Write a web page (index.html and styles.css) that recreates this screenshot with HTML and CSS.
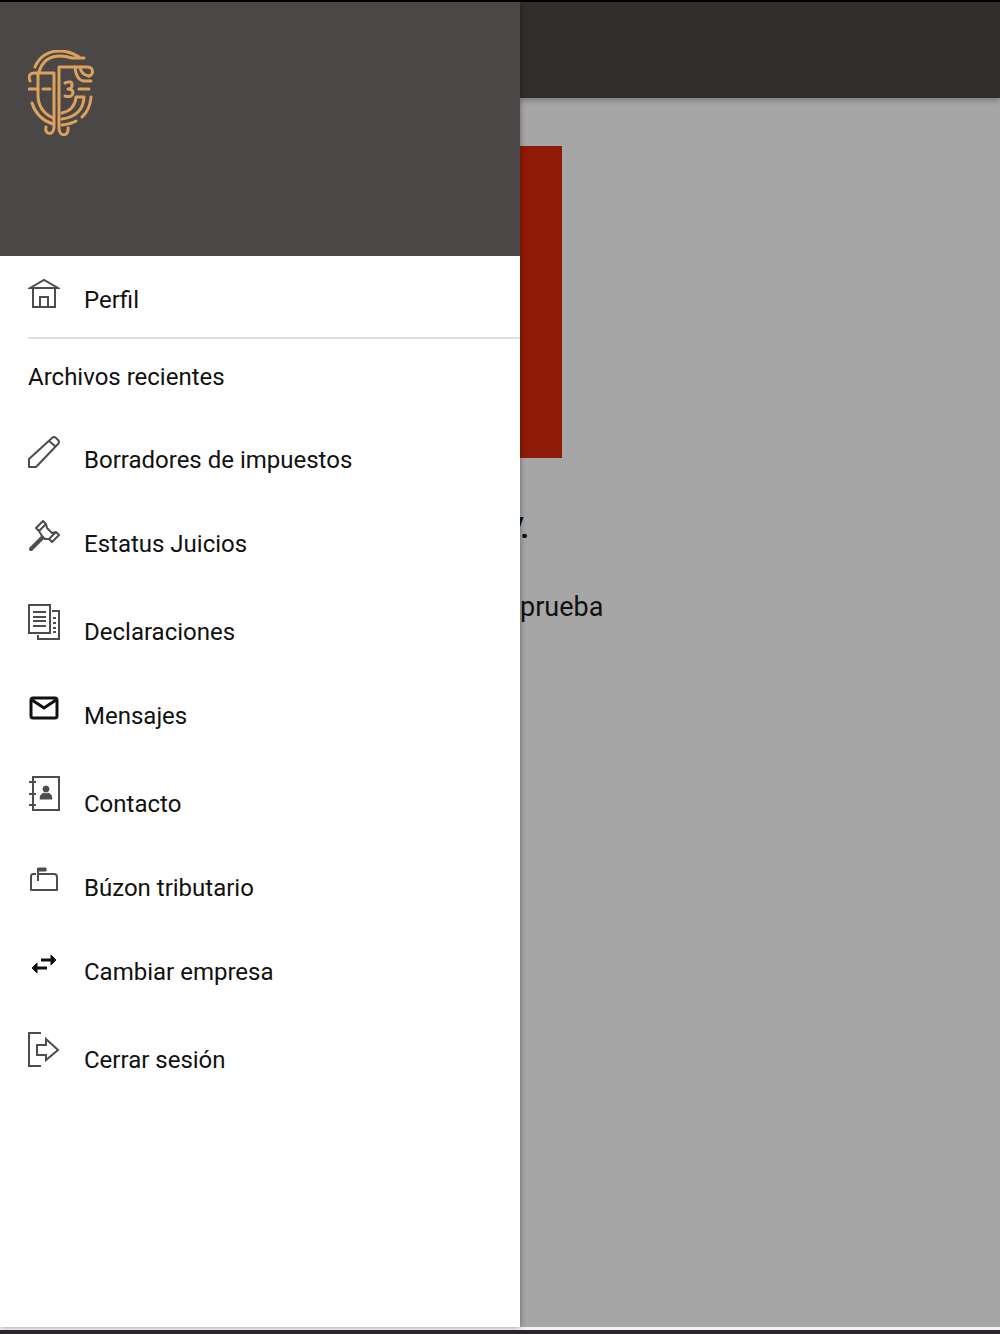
FILE: index.html
```html
<!DOCTYPE html>
<html lang="es">
<head>
    <meta charset="UTF-8">
    <meta name="viewport" content="width=device-width, initial-scale=1.0">
    <title>Perfil</title>
    <link rel="stylesheet" href="styles.css">
</head>
<body>
    <div class="app">
        <aside class="drawer">
            <div class="drawer-header">
                <svg class="logo" viewBox="0 0 66 86" aria-hidden="true">
                    <path d="M7 17C11 7 20 1 31 1Q42 1 51 7M11 22C14 12 21 6 32 6Q38 6 44 8H56"/>
                    <path d="M2 31Q-1 23 7 23H26V77C26 86 16 85 18 77"/>
                    <path d="M59 17H31V78C31 87 41 87 40 78M59 17C66 17 66 25 61 26"/>
                    <path d="M47 17Q48 30 56 31H63M52 17Q53 25 61 26"/>
                    <path d="M10 23V45Q10 61 25 68M4 53Q9 69 25 74"/>
                    <path d="M1 39H10M15 39H22M51 39H61"/>
                    <path d="M37 33Q44 30 44 35Q44 39 40 39Q45 39 45 43Q44 48 37 46"/>
                    <path d="M34 63Q47 60 48 47H56Q55 66 34 69M63 47Q62 60 54 67M34 75Q43 74 48 71"/>
                </svg>
            </div>
            <nav>
                <ul class="menu menu-profile">
                    <li>
                        <a class="menu-item" href="#perfil">
                            <svg class="icon" viewBox="0 0 32 32" aria-hidden="true">
                                <path d="M2 12L16 4L30 12ZM5 12V31H27V12M12 31V21H20V31"/>
                            </svg>
                            <span>Perfil</span>
                        </a>
                    </li>
                </ul>
                <h2 class="menu-title">Archivos recientes</h2>
                <ul class="menu">
                    <li>
                        <a class="menu-item" href="#borradores">
                            <svg class="icon thin" viewBox="0 0 32 32" aria-hidden="true">
                                <path d="M1 31V23L24 2Q26 0 28 2L30 4Q32 6 30 8L8 31ZM21 5L28 11"/>
                            </svg>
                            <span>Borradores de impuestos</span>
                        </a>
                    </li>
                    <li>
                        <a class="menu-item" href="#juicios">
                            <svg class="icon thin" viewBox="0 0 32 32" aria-hidden="true">
                                <path d="M8 8L15 1L18 4L11 11ZM21 19L28 12L31 15L24 22ZM11 11L14 16L17 19L21 19M18 4L19 8L24 13L28 12"/>
                                <path class="handle" d="M3 29L14 18"/>
                            </svg>
                            <span>Estatus Juicios</span>
                        </a>
                    </li>
                    <li>
                        <a class="menu-item" href="#declaraciones">
                            <svg class="icon tall" viewBox="0 0 32 36" aria-hidden="true">
                                <path d="M1 1H22V29H1ZM24 7H31V35H10V31"/>
                                <path d="M5 8H18M5 13H18M5 17H18M5 22H18"/>
                                <path d="M25 14H28M25 19H28M25 24H28M25 28H28"/>
                            </svg>
                            <span>Declaraciones</span>
                        </a>
                    </li>
                    <li>
                        <a class="menu-item" href="#mensajes">
                            <svg class="icon dark" viewBox="0 0 32 32" aria-hidden="true">
                                <rect x="3" y="6" width="26" height="20" rx="2"/>
                                <path d="M4 8L16 16L28 8"/>
                            </svg>
                            <span>Mensajes</span>
                        </a>
                    </li>
                    <li>
                        <a class="menu-item" href="#contacto">
                            <svg class="icon tall" viewBox="0 0 32 36" aria-hidden="true">
                                <path d="M5 1H31V34H5ZM1 6H8M1 18H8M1 29H8"/>
                                <circle class="solid" cx="18" cy="13" r="3"/>
                                <path class="solid" d="M12 23Q12 18 16 17L18 18L20 17Q24 18 24 23Z"/>
                            </svg>
                            <span>Contacto</span>
                        </a>
                    </li>
                    <li>
                        <a class="menu-item" href="#buzon">
                            <svg class="icon thin" viewBox="0 0 32 32" aria-hidden="true">
                                <path d="M8 10H5Q3 10 3 13V26H29V13Q29 10 26 10H11M10 17V4"/>
                                <path class="solid" d="M10 4H18V7H10Z"/>
                            </svg>
                            <span>Búzon tributario</span>
                        </a>
                    </li>
                    <li>
                        <a class="menu-item" href="#empresa">
                            <svg class="icon dark" viewBox="0 0 32 32" aria-hidden="true">
                                <path d="M13 12H24M8 20H19"/>
                                <path class="solid" d="M23 7L28 12L23 17ZM9 15L4 20L9 25Z"/>
                            </svg>
                            <span>Cambiar empresa</span>
                        </a>
                    </li>
                    <li>
                        <a class="menu-item" href="#salir">
                            <svg class="icon tall" viewBox="0 0 32 36" aria-hidden="true">
                                <path d="M13 1H1V34H13"/>
                                <path d="M9 13H18V7L30 18L18 28V23H9Z"/>
                            </svg>
                            <span>Cerrar sesión</span>
                        </a>
                    </li>
                </ul>
            </nav>
        </aside>

        <main class="content">
            <div class="toolbar"></div>
            <div class="banner"></div>
            <h1 class="company"><span>V.</span></h1>
            <p class="user">prueba</p>
        </main>
    </div>
</body>
</html>
```

FILE: styles.css
```css
* {
    margin: 0;
    padding: 0;
    box-sizing: border-box;
}

body {
    font-family: Roboto, "Liberation Sans", sans-serif;
    background: #f4f4f4;
    color: #111;
}

.app {
    display: grid;
    grid-template-columns: 52% 1fr;
    min-height: 100vh;
    border-top: 2px solid #000;
    border-bottom: 4px solid #2a272a;
    padding-bottom: 3px;
}

/* Side menu */
.drawer {
    background: #fff;
    box-shadow: 0 0 6px rgba(0,0,0,0.4);
    z-index: 1;
}

.drawer-header {
    height: 254px;
    padding: 48px 28px;
    background: #4b4746;
}

.logo {
    display: block;
    width: 66px;
    height: 86px;
    fill: none;
    stroke: #dda05d;
    stroke-width: 3;
    stroke-linecap: round;
    stroke-linejoin: round;
}

.menu {
    list-style: none;
}

.menu-item {
    display: flex;
    align-items: flex-end;
    gap: 24px;
    padding: 21px 28px 25px;
    color: inherit;
    font-size: 24px;
    line-height: 28px;
    text-decoration: none;
}

.menu-profile {
    margin-left: 28px;
    border-bottom: 2px solid #e0e0e0;
}

.menu-profile .menu-item {
    padding: 20px 28px 23px 0;
}

.menu-title {
    padding: 24px 28px;
    font-size: 24px;
    font-weight: 400;
    line-height: 28px;
}

.icon {
    flex: none;
    width: 32px;
    height: 32px;
    margin-bottom: 6px;
    fill: none;
    stroke: #4d4d4d;
    stroke-width: 2;
}

.icon.tall {
    height: 36px;
}

.icon.thin {
    stroke-linejoin: round;
}

.icon.dark {
    stroke: #111;
    stroke-width: 3;
}

.icon .handle {
    stroke-width: 4;
    stroke-linecap: round;
}

.icon .solid {
    fill: #4d4d4d;
    stroke-width: 1;
}

.icon.dark .solid {
    fill: #111;
}

/* Dimmed page behind the menu */
.content {
    overflow: hidden;
    background: #a6a6a6;
}

.toolbar {
    height: 96px;
    background: #302f2d;
    box-shadow: 0 2px 6px rgba(0,0,0,0.3);
}

.banner {
    width: 42px;
    height: 312px;
    margin-top: 48px;
    background: #8f1a07;
}

/* only the end of the name shows past the menu */
.company {
    display: flex;
    justify-content: flex-end;
    width: 9px;
    margin-top: 52px;
    overflow: hidden;
    font-size: 30px;
    font-weight: 700;
    line-height: 36px;
}

.user {
    margin-top: 45px;
    font-size: 27px;
    line-height: 32px;
}
```
